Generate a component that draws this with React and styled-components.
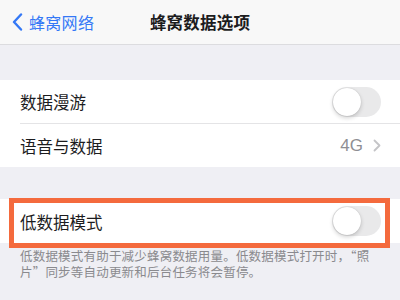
import React from "react";
import styled, { createGlobalStyle } from "styled-components";

const Global = createGlobalStyle`
  html, body { margin: 0; padding: 0; }
  body {
    width: 400px; height: 300px; overflow: hidden;
    background: #efeff4;
    font-family: "Noto Sans CJK SC", "Noto Sans", sans-serif;
  }
`;

const Page = styled.div`
  width: 400px;
  height: 300px;
  background: #efeff4;
  display: flex;
  flex-direction: column;
`;

const NavBar = styled.div`
  height: 44px;
  flex: none;
  background: #f8f8f8;
  border-bottom: 1px solid #dcdcdf;
  display: grid;
  grid-template-columns: 1fr auto 1fr;
  align-items: center;
`;

const Back = styled.div`
  display: flex;
  align-items: center;
  gap: 6px;
  padding-left: 12px;
  color: #3478f6;
  font-size: 16px;
  letter-spacing: 0.3px;
`;

const Title = styled.div`
  font-size: 16.5px;
  font-weight: 600;
  color: #1c1c1e;
  letter-spacing: 0.2px;
`;

const Gap = styled.div`
  height: ${(p) => p.$h}px;
  flex: none;
`;

const Group = styled.div`
  background: #ffffff;
  flex: none;
`;

const RowWrap = styled.div`
  position: relative;
  background: #ffffff;
  flex: none;
`;

const Row = styled.div`
  height: ${(p) => p.$h || 43}px;
  display: flex;
  align-items: center;
  padding: 0 19px 0 20px;
`;

const Divider = styled.div`
  height: 1px;
  background: #e4e4e6;
  margin-left: 20px;
`;

const Label = styled.div`
  flex: 1;
  font-size: 16.5px;
  color: #1c1c1e;
  padding-top: 1px;
`;

const Value = styled.div`
  font-size: 17px;
  color: #8e8e93;
  font-family: "Liberation Sans", "Noto Sans", sans-serif;
  margin-right: 10px;
`;

const Track = styled.div`
  width: 49px;
  height: 30px;
  box-sizing: border-box;
  border-radius: 15px;
  background: #e9e9ea;
  position: relative;
`;

const Knob = styled.div`
  position: absolute;
  top: 1px;
  left: 1px;
  width: 28px;
  height: 28px;
  border-radius: 50%;
  background: #ffffff;
  box-shadow: 0 2px 4px rgba(0, 0, 0, 0.18), 0 0 1px rgba(0, 0, 0, 0.2);
`;

const Highlight = styled.div`
  position: absolute;
  left: 9px;
  right: 10px;
  top: -1px;
  bottom: -5px;
  border: 5px solid #f46a3d;
  pointer-events: none;
`;

const Footer = styled.div`
  width: 360px;
  padding: 5px 0 0 20px;
  font-size: 12.5px;
  letter-spacing: 0.2px;
  line-height: 15.5px;
  color: #8a8a8e;
`;

const Toggle = () => (
  <Track>
    <Knob />
  </Track>
);

export default function App() {
  return (
    <>
      <Global />
      <Page>
        <NavBar>
          <Back>
            <svg width="11" height="18" viewBox="0 0 11 18">
              <path d="M9 1.5 L2 9 L9 16.5" fill="none" stroke="#3478f6" strokeWidth="2.4" strokeLinecap="round" strokeLinejoin="round" />
            </svg>
            <span>蜂窝网络</span>
          </Back>
          <Title>蜂窝数据选项</Title>
          <div />
        </NavBar>
        <Gap $h={35} />
        <Group>
          <Row>
            <Label>数据漫游</Label>
            <Toggle />
          </Row>
          <Divider />
          <Row>
            <Label>语音与数据</Label>
            <Value>4G</Value>
            <svg width="8" height="13" viewBox="0 0 8 13">
              <path d="M1.5 1.5 L6.5 6.5 L1.5 11.5" fill="none" stroke="#c4c4c7" strokeWidth="1.8" strokeLinecap="round" strokeLinejoin="round" />
            </svg>
          </Row>
        </Group>
        <Gap $h={32} />
        <RowWrap>
          <Row $h={44}>
            <Label>低数据模式</Label>
            <Toggle />
          </Row>
          <Highlight />
        </RowWrap>
        <Footer>
          低数据模式有助于减少蜂窝数据用量。低数据模式打开时，“照片”同步等自动更新和后台任务将会暂停。
        </Footer>
      </Page>
    </>
  );
}
